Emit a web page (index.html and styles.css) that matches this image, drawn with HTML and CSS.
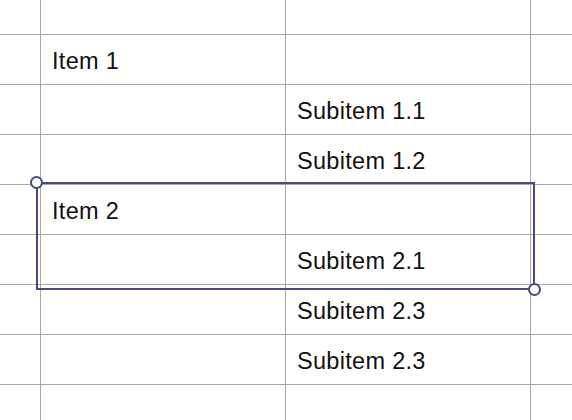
FILE: index.html
```html
<!DOCTYPE html>
<html>
<head>
<meta charset="utf-8">
<link rel="stylesheet" href="styles.css">
</head>
<body>
<div class="sheet">
  <div class="grid">
    <div class="cell row-top"></div><div class="cell row-top"></div><div class="cell row-top"></div><div class="cell row-top"></div>

    <div class="cell"></div><div class="cell"><span class="txt">Item 1</span></div><div class="cell"></div><div class="cell"></div>
    <div class="cell"></div><div class="cell"></div><div class="cell"><span class="txt">Subitem 1.1</span></div><div class="cell"></div>
    <div class="cell"></div><div class="cell"></div><div class="cell"><span class="txt">Subitem 1.2</span></div><div class="cell"></div>
    <div class="cell"></div><div class="cell"><span class="txt">Item 2</span></div><div class="cell"></div><div class="cell"></div>
    <div class="cell"></div><div class="cell"></div><div class="cell"><span class="txt">Subitem 2.1</span></div><div class="cell"></div>
    <div class="cell"></div><div class="cell"></div><div class="cell"><span class="txt">Subitem 2.3</span></div><div class="cell"></div>
    <div class="cell"></div><div class="cell"></div><div class="cell"><span class="txt">Subitem 2.3</span></div><div class="cell"></div>
    <div class="cell row-last"></div><div class="cell row-last"></div><div class="cell row-last"></div><div class="cell row-last"></div>
  </div>
  <div class="selection">
    <span class="handle handle-tl"></span>
    <span class="handle handle-br"></span>
  </div>
</div>
</body>
</html>
```
FILE: styles.css
```css
html, body {
  margin: 0;
  padding: 0;
  background: #ffffff;
}

.sheet {
  position: relative;
  width: 572px;
  height: 420px;
  overflow: hidden;
  font-family: "Liberation Sans", Arial, sans-serif;
  color: #111111;
}

.grid {
  display: grid;
  grid-template-columns: 41px 245px 245px 41px;
  grid-template-rows: 35px repeat(7, 50px) 35px;
}

.cell {
  box-sizing: border-box;
  border-right: 1px solid #a8a8a8;
  border-bottom: 1px solid #a8a8a8;
  display: flex;
  align-items: center;
  padding-left: 11px;
}

.cell:nth-child(4n) {
  border-right: none;
}

.row-last {
  border-bottom: none;
}

.txt {
  font-size: 23.5px;
  letter-spacing: 0.3px;
  line-height: 1;
  padding-top: 4px;
}

.selection {
  position: absolute;
  left: 36px;
  top: 182px;
  width: 499px;
  height: 108px;
  box-sizing: border-box;
  border: 2px solid #484b7c;
}

.handle {
  position: absolute;
  width: 13px;
  height: 13px;
  box-sizing: border-box;
  border: 2px solid #484b7c;
  border-radius: 50%;
  background: #ffffff;
}

.handle-tl {
  left: -8px;
  top: -8px;
}

.handle-br {
  right: -8px;
  bottom: -8px;
}
```
